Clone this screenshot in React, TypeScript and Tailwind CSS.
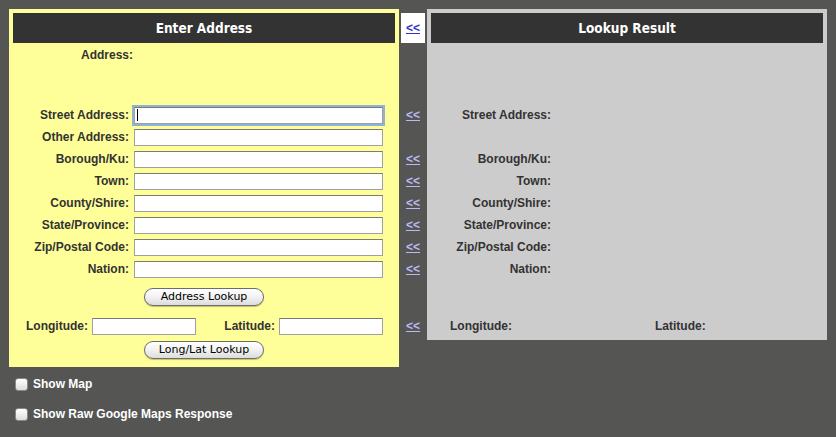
import React from "react";

const rows = [
  "Street Address:",
  "Other Address:",
  "Borough/Ku:",
  "Town:",
  "County/Shire:",
  "State/Province:",
  "Zip/Postal Code:",
  "Nation:",
];

const resultRows = [
  "Street Address:",
  "",
  "Borough/Ku:",
  "Town:",
  "County/Shire:",
  "State/Province:",
  "Zip/Postal Code:",
  "Nation:",
];

const label = "font-bold text-[12px] text-[#333333] font-['Liberation_Sans',Arial,sans-serif]";
const title =
  "h-[30px] bg-[#333333] flex items-center justify-center text-white font-bold text-[13.5px] font-['DejaVu_Sans_Condensed','DejaVu_Sans',sans-serif]";

function TextBox({ width, focused }: { width: string; focused?: boolean }) {
  return (
    <div
      className={
        "h-[17px] bg-white border border-[#a0a0a0] border-t-[#7a7a7a] " +
        width +
        (focused ? " shadow-[0_0_0_2px_#8fb2d6] border-[#6f8fb3] flex items-center pl-[2px]" : "")
      }
    >
      {focused && <span className="w-px h-[12px] bg-black" />}
    </div>
  );
}

function PillButton({ children }: { children: React.ReactNode }) {
  return (
    <div className="w-[120px] h-[18px] rounded-full border border-[#6d6d6d] bg-[linear-gradient(#ffffff,#f2f2f2_50%,#dcdcdc)] flex items-center justify-center text-[11px] text-black font-['DejaVu_Sans',sans-serif] shadow-[0_1px_1px_rgba(0,0,0,0.25)]">
      {children}
    </div>
  );
}

function Back({ visited }: { visited?: boolean }) {
  return (
    <span
      className={
        "font-bold text-[12px] underline leading-none font-['Liberation_Sans',Arial,sans-serif] " +
        (visited ? "text-[#b9b9f4]" : "text-[#3333cc]")
      }
    >
      &lt;&lt;
    </span>
  );
}

function CheckRow({ text }: { text: string }) {
  return (
    <div className="h-[18px] flex items-center gap-[5px] pl-[6px]">
      <span className="w-[13px] h-[13px] rounded-[3px] border border-[#8a8a8a] bg-[linear-gradient(#ffffff,#dedede)]" />
      <span className="text-white font-bold text-[12px] font-['Liberation_Sans',Arial,sans-serif]">
        {text}
      </span>
    </div>
  );
}

export default function App() {
  return (
    <div className="w-[836px] h-[437px] bg-[#555553] pt-[9px] pl-[9px] overflow-hidden">
      <div className="flex items-start">
        {/* enter address */}
        <div className="w-[390px] bg-[#ffff99] p-[4px]">
          <div className={title}>Enter Address</div>
          <div className="h-[24px] w-[120px] flex items-center justify-end">
            <span className={label}>Address:</span>
          </div>
          <div className="h-[37px]" />
          {rows.map((r, i) => (
            <div key={r} className="h-[22px] flex items-center">
              <span className={label + " w-[116px] text-right"}>{r}</span>
              <div className="ml-[5px]">
                <TextBox width="w-[249px]" focused={i === 0} />
              </div>
            </div>
          ))}
          <div className="flex justify-center pt-[8px] pb-[8px]">
            <PillButton>Address Lookup</PillButton>
          </div>
          <div className="h-[24px] flex items-center">
            <span className={label + " w-[75px] text-right"}>Longitude:</span>
            <div className="ml-[4px]">
              <TextBox width="w-[104px]" />
            </div>
            <span className={label + " w-[79px] text-right"}>Latitude:</span>
            <div className="ml-[4px]">
              <TextBox width="w-[104px]" />
            </div>
          </div>
          <div className="flex justify-center pt-[3px] pb-[4px]">
            <PillButton>Long/Lat Lookup</PillButton>
          </div>
        </div>

        {/* back links */}
        <div className="w-[28px] flex flex-col">
          <div className="ml-[2px] mt-[4px] w-[24px] h-[30px] bg-white flex items-center justify-center">
            <Back />
          </div>
          <div className="h-[61px]" />
          {resultRows.map((r, i) => (
            <div key={i} className="h-[22px] flex items-center justify-center">
              {r && <Back visited />}
            </div>
          ))}
          <div className="h-[35px]" />
          <div className="h-[22px] flex items-center justify-center">
            <Back visited />
          </div>
        </div>

        {/* lookup result */}
        <div className="w-[400px] bg-[#cccccc] px-[4px] pt-[4px] pb-[3px]">
          <div className={title}>Lookup Result</div>
          <div className="h-[61px]" />
          {resultRows.map((r, i) => (
            <div key={i} className="h-[22px] flex items-center">
              <span className={label + " w-[120px] text-right"}>{r}</span>
            </div>
          ))}
          <div className="h-[35px]" />
          <div className="h-[22px] flex items-center">
            <span className={label + " pl-[19px] w-[224px]"}>Longitude:</span>
            <span className={label}>Latitude:</span>
          </div>
        </div>
      </div>

      <div className="mt-[8px] flex flex-col gap-[12px]">
        <CheckRow text="Show Map" />
        <CheckRow text="Show Raw Google Maps Response" />
      </div>
    </div>
  );
}
